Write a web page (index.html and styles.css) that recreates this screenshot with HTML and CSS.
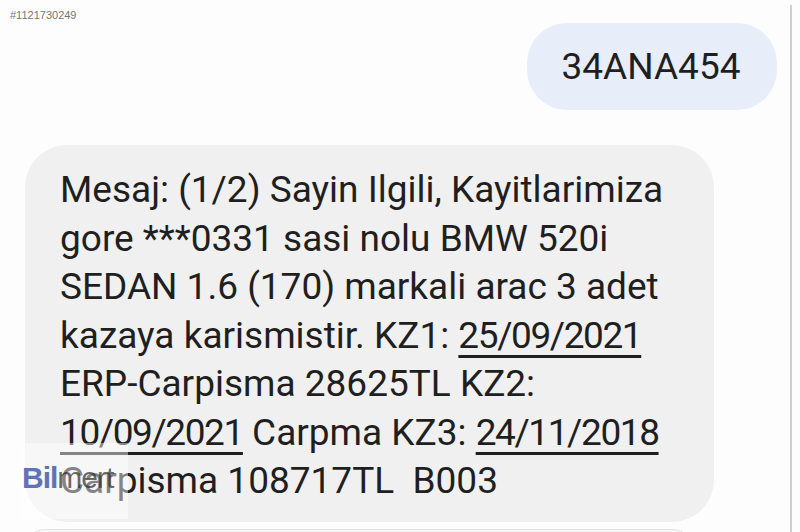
FILE: index.html
```html
<!DOCTYPE html>
<html lang="tr">
<head>
    <meta charset="UTF-8">
    <meta name="viewport" content="width=device-width, initial-scale=1.0">
    <title>Mesaj</title>
    <link rel="stylesheet" href="styles.css">
</head>
<body>
  <div class="screen">
    <div class="thread">
      <div class="msg-id">#1121730249</div>

      <div class="bubble sent">34ANA454</div>

      <div class="bubble received">
        Mesaj: (1/2) Sayin Ilgili, Kayitlarimiza<br>
        gore ***0331 sasi nolu BMW 520i<br>
        SEDAN 1.6 (170) markali arac 3 adet<br>
        kazaya karismistir. KZ1: <span class="date">25/09/2021</span><br>
        ERP-Carpisma 28625TL KZ2:<br>
        <span class="date">10/09/2021</span> Carpma KZ3: <span class="date">24/11/2018</span><br>
        Carpisma 108717TL&nbsp; B003

        <div class="watermark"><span class="wm-blue">Bil</span><span class="wm-dark">mert</span></div>
      </div>

      <div class="bubble next"></div>
    </div>
    <div class="edge"></div>
  </div>
</body>
</html>
```

FILE: styles.css
```css
body {
  margin: 0;
  background-color: #fdfdfd;
  font-family: Roboto, "Liberation Sans", sans-serif;
  color: #1f1f1f;
}

.screen {
  display: flex;
  width: 800px;
  height: 532px;
  overflow: hidden;
}

.thread {
  flex: 1;
  display: flex;
  flex-direction: column;
}

.thread > * {
  flex-shrink: 0;
}

.msg-id {
  padding: 9px 0 0 10px;
  height: 14px;
  font-family: "Liberation Sans", Arial, sans-serif;
  font-size: 11px;
  color: #767676;
}

.bubble {
  box-sizing: border-box;
}

.bubble.sent {
  align-self: flex-end;
  margin-right: 13px;
  width: 250px;
  height: 87px;
  border-radius: 40px;
  background-color: #e8edfa;
  display: flex;
  align-items: center;
  justify-content: center;
  font-size: 37px;
  padding-right: 2px;
}

.bubble.received {
  position: relative;
  margin-top: 35px;
  margin-left: 25px;
  width: 689px;
  height: 377px;
  padding: 21px 0 0 35px;
  border-radius: 42px;
  background-color: #f0f0f0;
  font-size: 37px;
  line-height: 48.5px;
  white-space: nowrap;
}

.date {
  letter-spacing: -1.4px;
  text-decoration: underline;
  text-decoration-thickness: 3px;
  text-underline-offset: 7px;
}

.bubble.next {
  margin-top: 7px;
  margin-left: 25px;
  width: 668px;
  height: 40px;
  border-radius: 20px;
  border-top: 1px solid #e2e2e2;
  background-color: #f6f6f6;
}

.watermark {
  position: absolute;
  left: -3px;
  top: 298px;
  width: 106px;
  height: 76px;
  background-color: rgba(255, 255, 255, 0.45);
  font-family: "Liberation Sans", Arial, sans-serif;
  font-size: 30px;
  line-height: 70px;
  letter-spacing: -1px;
}

.wm-blue {
  color: #6073b8;
  font-weight: bold;
}

.wm-dark {
  color: rgba(40, 40, 40, 0.7);
}

.edge {
  width: 2px;
  margin: 5px 8px 0 0;
  background-color: #cfcfcf;
}
```
